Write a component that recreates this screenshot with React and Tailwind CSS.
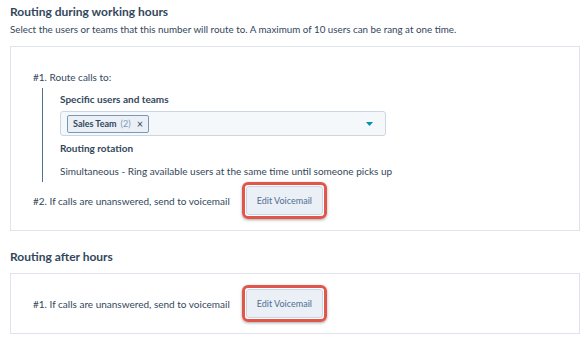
import React from 'react';

function VoicemailButton() {
  return (
    <div className="rounded-[6px] border-[3px] border-[#e0564a] p-[1px] shadow-[0_1px_3px_rgba(0,0,0,0.35)]">
      <button className="h-[29px] w-[77px] rounded-[3px] border border-[#cbd6e2] bg-[#eaf0f6] text-[9px] text-[#506e91]">
        Edit Voicemail
      </button>
    </div>
  );
}

export default function App() {
  return (
    <div
      className="h-[341px] w-[588px] bg-white pl-[10px] pr-[8px] pt-[3px] text-[#33475b]"
      style={{ fontFamily: 'Lato, "Open Sans", sans-serif' }}
    >
      <h2 className="text-[12px] font-bold leading-[18px]">Routing during working hours</h2>
      <p className="mt-[1px] text-[9.8px] leading-[14px]">
        Select the users or teams that this number will route to. A maximum of 10 users can be rang at one time.
      </p>

      <div className="mt-[10px] h-[185px] border border-[#dfe3eb] pl-[22px] pt-[23px]">
        <p className="text-[10px] leading-[14px]">#1. Route calls to:</p>
        <div className="ml-[9px] mt-[4px] border-l border-[#516f90] pl-[17px] pt-[4px]">
          <p className="text-[10px] font-bold leading-[14px]">Specific users and teams</p>
          <div className="mt-[5px] flex h-[25px] w-[326px] items-center justify-between rounded-[3px] border border-[#cbd6e2] bg-[#f5f8fa] pl-[6px] pr-[12px]">
            <span className="flex h-[18px] items-center gap-[4px] rounded-[2px] border border-[#7c98b6] bg-[#eaf0f6] px-[5px] text-[9px]">
              <span className="font-bold">Sales Team</span>
              <span className="text-[#7c98b6]">(2)</span>
              <span className="ml-[2px] text-[11px] leading-none">×</span>
            </span>
            <svg width="7" height="4" viewBox="0 0 7 4">
              <path d="M0 0 L7 0 L3.5 4 Z" fill="#0091ae" />
            </svg>
          </div>
          <p className="mt-[5px] text-[10px] font-bold leading-[14px]">Routing rotation</p>
          <p className="mt-[9px] pb-[4px] text-[10px] leading-[14px]">
            Simultaneous - Ring available users at the same time until someone picks up
          </p>
        </div>
        <div className="flex items-center gap-[12px]">
          <span className="text-[10px] leading-[14px]">#2. If calls are unanswered, send to voicemail</span>
          <VoicemailButton />
        </div>
      </div>

      <h2 className="mt-[17px] text-[12px] font-bold leading-[18px]">Routing after hours</h2>

      <div className="mt-[7px] flex h-[61px] items-center gap-[12px] border border-[#dfe3eb] pl-[22px]">
        <span className="text-[10px] leading-[14px]">#1. If calls are unanswered, send to voicemail</span>
        <VoicemailButton />
      </div>
    </div>
  );
}
